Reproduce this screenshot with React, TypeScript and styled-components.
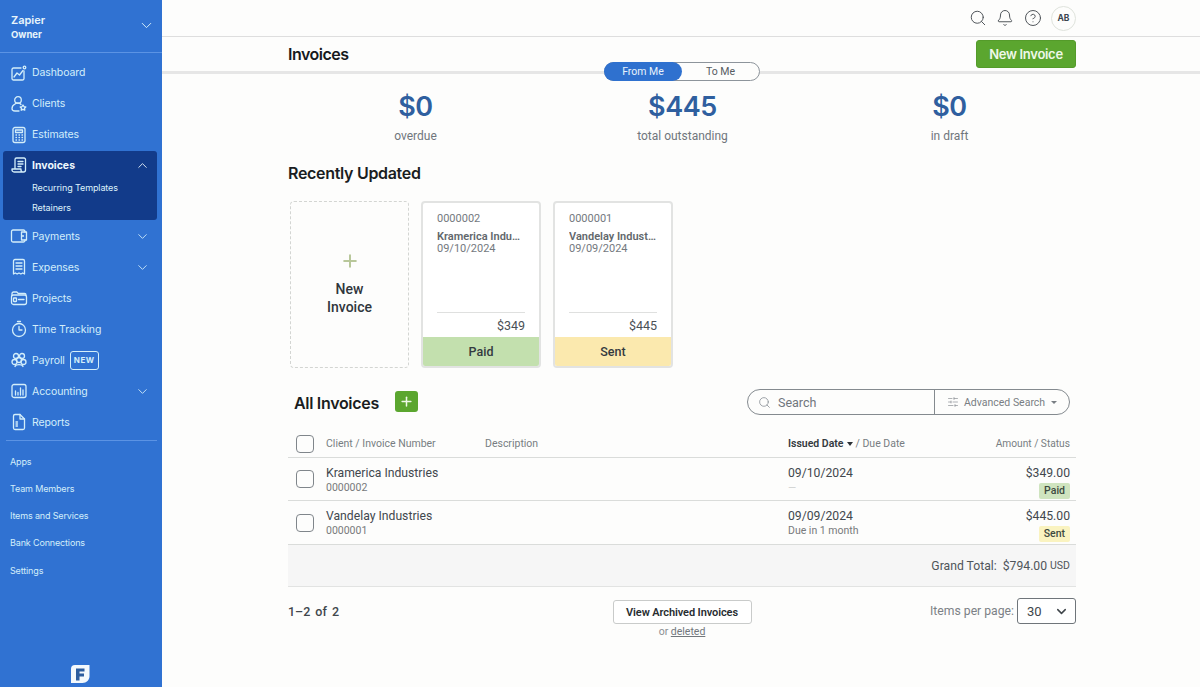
import React from "react";
import styled, { createGlobalStyle } from "styled-components";
import { ChevronDown, ChevronUp, Search, Bell, CircleHelp, SlidersHorizontal, Plus } from "lucide-react";

const Global = createGlobalStyle`
  html, body { margin: 0; padding: 0; background: #fdfdfc; }
  * { box-sizing: border-box; }
  body { font-family: Roboto, "Noto Sans", sans-serif; overflow: hidden; }
`;

const head = `"Inter", "Liberation Sans", sans-serif`;
const body = `Roboto, "Noto Sans", sans-serif`;
const ICE = "#d3eefa";

const Shell = styled.div`display: flex; width: 1200px; height: 687px; overflow: hidden;`;

const Sidebar = styled.aside`
  width: 162px; height: 687px; flex: none; background: #3072d2; color: ${ICE};
  display: flex; flex-direction: column; font-family: ${head};
`;
const Account = styled.div`
  height: 53px; flex: none; padding: 13px 7px 0 11px; display: flex; justify-content: space-between;
  border-bottom: 1px solid #5b93e4;
`;
const AccountName = styled.div`font-size: 11px; font-weight: 600; line-height: 15px; color: #e8f5fb;`;
const AccountRole = styled.div`font-size: 9.5px; font-weight: 700; line-height: 14px; color: #e8f5fb;`;
const AccountChevron = styled.div`padding-top: 4px; display: flex;`;
const Nav = styled.nav`display: flex; flex-direction: column; padding-top: 4px;`;
const NavItem = styled.div`
  height: 31px; display: flex; align-items: center; gap: 4px; padding: 0 12px 0 10px; font-size: 10.5px;
  letter-spacing: -0.1px; color: ${ICE};
`;
const NavLabel = styled.span`flex: 1; display: flex; align-items: center; gap: 5px; white-space: nowrap;`;
const NewTag = styled.span`
  border: 1px solid ${ICE}; border-radius: 3px; font-size: 8px; font-weight: 700; letter-spacing: 0.5px;
  padding: 0 3px; height: 19px; line-height: 17px;
`;
const ActiveGroup = styled.div`
  margin: 1px 5px 0.5px 3px; height: 69px; background: #123b8a; border-radius: 3px; flex: none;
`;
const ActiveItem = styled.div`
  height: 28px; display: flex; align-items: center; gap: 4px; padding: 0 7px; font-size: 10.5px;
  font-weight: 700; color: #eef8fd;
`;
const SubItem = styled.div`
  height: 20px; line-height: 20px; padding-left: 29px; font-size: 9px; color: #dff2fb; letter-spacing: -0.1px;
`;
const SubList = styled.div`margin-top: -1px;`;
const SideRule = styled.div`height: 1px; background: #5b93e4; margin: 2px 5px 7px 6px; flex: none;`;
const SideLink = styled.div`height: 27.3px; line-height: 27px; padding-left: 10px; font-size: 9px; letter-spacing: -0.15px; color: ${ICE};`;
const LogoSlot = styled.div`margin-top: auto; padding-bottom: 3px; display: flex; justify-content: center; padding-right: 2px;`;

const Main = styled.main`flex: 1; min-width: 0; display: flex; flex-direction: column; position: relative;`;
const TopBar = styled.header`
  height: 37px; flex: none; border-bottom: 1px solid #dedede; display: flex; justify-content: flex-end;
  align-items: center; gap: 9.5px; padding-right: 124px; color: #4d5257;
`;
const Avatar = styled.div`
  width: 25px; height: 25px; border-radius: 50%; border: 1.5px solid #dfe3dc; display: flex; align-items: center;
  justify-content: center; font: 700 8.5px ${head}; color: #3c4650;
`;
const PageHead = styled.div`
  height: 37px; flex: none; border-bottom: 3px solid #e6e6e6; padding: 3px 124px 0 126px; display: flex;
  justify-content: space-between; align-items: flex-start; position: relative;
`;
const PageTitle = styled.h1`margin: 2px 0 0; font: 600 16px/24px ${head}; letter-spacing: -0.5px; color: #16191d;`;
const PrimaryButton = styled.button`
  width: 100px; height: 28px; border: 1px solid #549b2a; border-radius: 3px; background: #5ba62f; color: #eef8e8;
  font: 600 13px ${head}; letter-spacing: -0.3px; padding: 0;
`;
const Toggle = styled.div`
  position: absolute; left: 442px; top: 25px; width: 156px; height: 19px; border: 1px solid #8d949b; border-radius: 10px;
  background: #fdfdfc; display: flex; font: 400 10.5px/18px ${body};
`;
const ToggleOption = styled.div<{ $on?: boolean }>`
  flex: ${(p) => (p.$on ? "0 0 78px" : "1")}; margin: ${(p) => (p.$on ? "-1px 0 -1px -1px" : "0")}; text-align: center;
  border-radius: 10px; line-height: ${(p) => (p.$on ? "20px" : "18px")};
  background: ${(p) => (p.$on ? "#2f71cf" : "transparent")}; color: ${(p) => (p.$on ? "#e8f3fb" : "#555b61")};
`;
const Content = styled.div`padding: 0 124px 0 126px; display: flex; flex-direction: column;`;
const Stats = styled.div`display: grid; grid-template-columns: repeat(3, 267px); margin: 13px 0 0 -6px; height: 74px;`;
const Stat = styled.div`text-align: center;`;
const StatValue = styled.div`font: 600 27px/40px ${head}; color: #2f5f9f; letter-spacing: -0.4px;`;
const StatLabel = styled.div`font: 400 12px/17px ${body}; color: #70767c; margin-top: 1px;`;
const SectionTitle = styled.h2`margin: 0; font: 600 16px/24px ${head}; letter-spacing: -0.31px; color: #1a1d21;`;
const Cards = styled.div`display: flex; gap: 12px; margin: 16px 0 0 2px;`;
const NewCard = styled.div`
  width: 119px; height: 167px; border: 1.5px dashed #d3d5d2; border-radius: 4px; display: flex; flex-direction: column;
  align-items: center; padding-top: 49px; font: 500 14px/18px ${body}; color: #30363c; text-align: center;
`;
const PlusSlot = styled.div`height: 29px; color: #b8c79a; display: flex; justify-content: center;`;
const InvoiceCard = styled.div`
  width: 120px; height: 167px; border: 2px solid #e2e3e2; border-radius: 4px; display: flex; flex-direction: column;
  background: #fff; overflow: hidden;
`;
const CardTop = styled.div`flex: 1; padding: 9px 14px 0 14px; display: flex; flex-direction: column; min-width: 0;`;
const CardNumber = styled.div`font: 400 11px/14px ${body}; color: #74797e;`;
const CardClient = styled.div`font: 600 11px/13px ${body}; color: #62676c; margin-top: 4px; white-space: nowrap; overflow: hidden; text-overflow: ellipsis; min-height: 13px;`;
const CardDate = styled.div`font: 400 11px/12px ${body}; color: #74797e;`;
const CardAmount = styled.div`
  margin-top: auto; border-top: 1px solid #dfe0df; font: 400 12.5px/25px ${body}; color: #4a5056; text-align: right; height: 25px;
`;
const CardStatus = styled.div<{ $bg: string }>`
  height: 29px; flex: none; background: ${(p) => p.$bg}; text-align: center; font: 500 12.5px/29px ${body}; color: #333a3f;
`;
const ListHead = styled.div`display: flex; align-items: center; justify-content: space-between; margin-top: 20px; height: 28px; padding: 0 6px;`;
const ListTitleGroup = styled.div`display: flex; align-items: center; gap: 16px;`;
const ListTitle = styled(SectionTitle)`position: relative; top: 1px;`;
const AddButton = styled.button`
  width: 23px; height: 21px; border: 0; border-radius: 3px; background: #5ba62f; color: #eef8e8; padding: 0;
  display: flex; align-items: center; justify-content: center; position: relative; top: -1px;
`;
const SearchBox = styled.div`
  width: 323px; height: 26px; border: 1.5px solid #848a8f; border-radius: 13px; display: flex; align-items: stretch;
  font-family: ${body}; color: #70767c;
`;
const SearchField = styled.div`
  flex: 1; border-right: 1.5px solid #848a8f; display: flex; align-items: center; gap: 7px; padding-left: 10px; font-size: 12.5px;
`;
const AdvSearch = styled.div`width: 134px; display: flex; align-items: center; gap: 5px; padding-left: 12px; font-size: 10.5px; color: #797e83;`;
const Caret = styled.span`width: 0; height: 0; border-left: 3px solid transparent; border-right: 3px solid transparent; border-top: 3px solid currentColor; margin-left: 1px;`;
const Row = styled.div<{ $h: number }>`
  height: ${(p) => p.$h}px; display: grid; grid-template-columns: 31px 159px 303px 1fr 130px; align-items: center;
  border-bottom: 1px solid #dadcda; padding: 0 6px 0 7px;
`;
const HeadRow = styled(Row)`margin-top: 14px;`;
const HeadCell = styled.div`font: 400 10.5px/14px ${body}; color: #787d82; white-space: nowrap;`;
const HeadEnd = styled(HeadCell)`text-align: right; font-size: 10.2px;`;
const HeadStrong = styled.b`font-weight: 600; color: #343a40;`;
const HeadCaret = styled.span`display: inline-block; width: 0; height: 0; border-left: 3.5px solid transparent; border-right: 3.5px solid transparent; border-top: 4px solid #2b3035; margin: 0 3px 1px 3px;`;
const CheckBox = styled.div`width: 18px; height: 18px; border: 1.5px solid #80868b; border-radius: 4px; background: #fdfdfc; margin-left: 1px;`;
const Primary = styled.div`font: 400 12.2px/16px ${body}; color: #42484e;`;
const Secondary = styled.div<{ $faint?: boolean }>`font: 400 10.5px/14px ${body}; color: ${(p) => (p.$faint ? "#cfd1d0" : "#77797b")};`;
const TextCell = styled.div`padding-top: 1px;`;
const AmountCell = styled.div`display: flex; flex-direction: column; align-items: flex-end; padding-top: 5px;`;
const Badge = styled.span<{ $bg: string }>`
  background: ${(p) => p.$bg}; font: 500 10.5px/16px ${body}; color: #3e4a40; border-radius: 2px; padding: 0 5px; height: 16px; margin-top: 2px;
`;
const Total = styled.div`
  height: 42px; background: #f6f6f6; border-bottom: 1px solid #e2e3e2; display: flex; align-items: center; justify-content: flex-end;
  gap: 6px; padding-right: 6px; font: 400 12.2px ${body}; color: #4f555a;
`;
const Usd = styled.small`font-size: 10.5px; margin-left: -3px;`;
const Footer = styled.div`display: grid; grid-template-columns: 325px 138px 1fr; margin-top: 11px;`;
const Range = styled.div`font: 500 12.5px/28px ${body}; color: #41474c; word-spacing: 2px;`;
const ArchiveBlock = styled.div`display: flex; flex-direction: column; align-items: center; margin-top: 2px;`;
const ArchiveButton = styled.button`
  width: 139px; height: 24px; border: 1px solid #c9cbca; border-radius: 3px; background: #fff; padding: 0;
  font: 600 11px ${body}; color: #272c30; letter-spacing: -0.1px; white-space: nowrap;
`;
const OrDeleted = styled.div`font: 400 10.5px/14px ${body}; color: #8a8f93; margin-top: 1px;`;
const DeletedLink = styled.span`text-decoration: underline; color: #72777c;`;
const PerPage = styled.div`display: flex; justify-content: flex-end; align-items: center; gap: 3px; font: 400 12.2px ${body}; color: #7c8186; height: 26px;`;
const Select = styled.div`
  width: 59px; height: 26px; border: 1.5px solid #6f757a; border-radius: 3px; display: flex; align-items: center; justify-content: space-between;
  padding: 0 6px 0 9px; color: #40464b; font-size: 13px; background: #fff;
`;

const S = ({ children }: { children: React.ReactNode }) => (
  <svg width="18" height="18" viewBox="0 0 18 18" fill="none" stroke={ICE} strokeWidth="1.3" strokeLinecap="round" strokeLinejoin="round" style={{ flex: "none" }}>
    {children}
  </svg>
);

const icons: Record<string, React.ReactNode> = {
  dash: (<><path d="M14 7v7.5a1.5 1.5 0 0 1-1.5 1.5h-9A1.5 1.5 0 0 1 2 14.5v-9A1.5 1.5 0 0 1 3.500 4H11" /><circle cx="14.500" cy="3.500" r="1.300" /><path d="M4 13l3-4 2.500 2L13 6.500" /></>),
  clients: (<><circle cx="8" cy="5" r="3.300" /><path d="M11 9.500A4 4 0 0 0 5 9c-2 1-3 2.500-3 4.500 0 2 1.500 2.500 3 2.500h4" /><path d="M13 10l1 1.700 1.800.3-1.300 1.300.3 1.900-1.800-.9-1.800.9.300-1.900-1.300-1.300 1.800-.3z" /></>),
  est: (<><rect x="3" y="1.500" width="12" height="15" rx="2" /><rect x="5.500" y="4" width="7" height="2.500" /><path d="M6 9h.5M9 9h.5M12 9h.5M6 11.500h.5M9 11.500h.5M12 11.500h.5M6 14h.5M9 14h.5M12 14h.5" /></>),
  inv: (<><path d="M5 13V3.500A1.500 1.500 0 0 1 6.500 2H14a1.500 1.500 0 0 1 1.500 1.500V14a2 2 0 0 1-2 2H4a2 2 0 0 1-2-2v-1h9v1a2 2 0 0 0 2 2" /><path d="M8 5.500h5M8 8h5M8 10.500h3" /></>),
  pay: (<><path d="M15 5V4.500A1.500 1.500 0 0 0 13.500 3H3a1.500 1.500 0 0 0-1.500 1.500v9A1.500 1.500 0 0 0 3 15h10.500a1.500 1.500 0 0 0 1.500-1.500V13" /><path d="M16.500 5h-5v8h5z" /><circle cx="13" cy="9" r=".4" /></>),
  exp: (<><path d="M3.500 16V3A1.500 1.500 0 0 1 5 1.500h8A1.500 1.500 0 0 1 14.500 3v13l-1.800-1-1.800 1-1.900-1-1.900 1-1.800-1z" /><path d="M6 5h6M6 8h6M6 11h6" /></>),
  proj: (<><path d="M2 6V4.500A1.500 1.500 0 0 1 3.500 3h3.300l1.500 1.500h6.200A1.500 1.500 0 0 1 16 6" /><rect x="1.500" y="6" width="15" height="9.500" rx="2" /><rect x="3.500" y="9" width="3" height="3.500" rx=".5" /><path d="M8.500 10.500h5.500" /></>),
  time: (<><circle cx="9" cy="10" r="6.500" /><path d="M9 6.500V10h3M7.500 1.500h3" /></>),
  payroll: (<><circle cx="6" cy="5" r="2.500" /><circle cx="12" cy="5" r="2.500" /><circle cx="4.500" cy="11" r="2.500" /><circle cx="13.500" cy="11" r="2.500" /><circle cx="9" cy="9" r="2.500" /><path d="M5 15.500c1-2.500 7-2.500 8 0" /></>),
  acc: (<><rect x="2" y="2.500" width="14" height="13" rx="2" /><path d="M5.500 13V9M8 13V10.500M10.500 13V6M13 13V8" /></>),
  rep: (<><path d="M10 1.500H5A1.500 1.500 0 0 0 3.500 3v12A1.500 1.500 0 0 0 5 16.500h8a1.500 1.500 0 0 0 1.500-1.500V6z" /><path d="M10 1.500V6h4.500M6 9h1.500M6 11h1.500M6 13h1.500" /></>),
};

const navTop = [
  { k: "dash", t: "Dashboard" },
  { k: "clients", t: "Clients" },
  { k: "est", t: "Estimates" },
];
const navBottom = [
  { k: "pay", t: "Payments", more: true },
  { k: "exp", t: "Expenses", more: true },
  { k: "proj", t: "Projects" },
  { k: "time", t: "Time Tracking" },
  { k: "payroll", t: "Payroll", tag: true },
  { k: "acc", t: "Accounting", more: true },
  { k: "rep", t: "Reports" },
];
const links = ["Apps", "Team Members", "Items and Services", "Bank Connections", "Settings"];

const Item = ({ k, t, more, tag }: { k: string; t: string; more?: boolean; tag?: boolean }) => (
  <NavItem>
    <S>{icons[k]}</S>
    <NavLabel>
      {t}
      {tag && <NewTag>NEW</NewTag>}
    </NavLabel>
    {more && <ChevronDown size={15} strokeWidth={1.4} />}
  </NavItem>
);

export default function App() {
  return (
    <Shell>
      <Global />
      <Sidebar>
        <Account>
          <div>
            <AccountName>Zapier</AccountName>
            <AccountRole>Owner</AccountRole>
          </div>
          <AccountChevron><ChevronDown size={17} strokeWidth={1.4} /></AccountChevron>
        </Account>
        <Nav>
          {navTop.map((n) => <Item key={n.t} {...n} />)}
          <ActiveGroup>
            <ActiveItem>
              <S>{icons.inv}</S>
              <NavLabel>Invoices</NavLabel>
              <ChevronUp size={15} strokeWidth={1.4} />
            </ActiveItem>
            <SubList>
              <SubItem>Recurring Templates</SubItem>
              <SubItem>Retainers</SubItem>
            </SubList>
          </ActiveGroup>
          {navBottom.map((n) => <Item key={n.t} {...n} />)}
        </Nav>
        <SideRule />
        {links.map((l) => <SideLink key={l}>{l}</SideLink>)}
        <LogoSlot>
          <svg width="20" height="20" viewBox="0 0 20 20">
            <path d="M5 1h14.500v11c0 4-3 7-7 7H1V5a4 4 0 0 1 4-4z" fill="#f4f9fc" />
            <path d="M6 4.500h8.500v3H9.500v2H14v3H9.500v4H6z" fill="#2c5d9e" />
          </svg>
        </LogoSlot>
      </Sidebar>
      <Main>
        <TopBar>
          <Search size={18} strokeWidth={1.3} />
          <Bell size={18} strokeWidth={1.3} />
          <CircleHelp size={18} strokeWidth={1.3} />
          <Avatar>AB</Avatar>
        </TopBar>
        <PageHead>
          <PageTitle>Invoices</PageTitle>
          <PrimaryButton>New Invoice</PrimaryButton>
          <Toggle>
            <ToggleOption $on>From Me</ToggleOption>
            <ToggleOption>To Me</ToggleOption>
          </Toggle>
        </PageHead>
        <Content>
          <Stats>
            <Stat><StatValue>$0</StatValue><StatLabel>overdue</StatLabel></Stat>
            <Stat><StatValue>$445</StatValue><StatLabel>total outstanding</StatLabel></Stat>
            <Stat><StatValue>$0</StatValue><StatLabel>in draft</StatLabel></Stat>
          </Stats>
          <section>
            <SectionTitle>Recently Updated</SectionTitle>
            <Cards>
              <NewCard>
                <PlusSlot><Plus size={20} strokeWidth={2.4} /></PlusSlot>
                New<br />Invoice
              </NewCard>
              <InvoiceCard>
                <CardTop>
                  <CardNumber>0000002</CardNumber>
                  <CardClient>Kramerica Industries</CardClient>
                  <CardDate>09/10/2024</CardDate>
                  <CardAmount>$349</CardAmount>
                </CardTop>
                <CardStatus $bg="#c3e0ae">Paid</CardStatus>
              </InvoiceCard>
              <InvoiceCard>
                <CardTop>
                  <CardNumber>0000001</CardNumber>
                  <CardClient>Vandelay Industries</CardClient>
                  <CardDate>09/09/2024</CardDate>
                  <CardAmount>$445</CardAmount>
                </CardTop>
                <CardStatus $bg="#fbe9ae">Sent</CardStatus>
              </InvoiceCard>
            </Cards>
          </section>
          <ListHead>
            <ListTitleGroup>
              <ListTitle>All Invoices</ListTitle>
              <AddButton><Plus size={15} strokeWidth={2.4} /></AddButton>
            </ListTitleGroup>
            <SearchBox>
              <SearchField><Search size={13} strokeWidth={1.5} color="#8a9096" />Search</SearchField>
              <AdvSearch><SlidersHorizontal size={12} strokeWidth={1.2} />Advanced Search<Caret /></AdvSearch>
            </SearchBox>
          </ListHead>
          <HeadRow $h={28}>
            <CheckBox />
            <HeadCell>Client / Invoice Number</HeadCell>
            <HeadCell>Description</HeadCell>
            <HeadCell><HeadStrong>Issued Date</HeadStrong><HeadCaret />/ Due Date</HeadCell>
            <HeadEnd>Amount / Status</HeadEnd>
          </HeadRow>
          <Row $h={43}>
            <CheckBox />
            <TextCell><Primary>Kramerica Industries</Primary><Secondary>0000002</Secondary></TextCell>
            <div />
            <TextCell><Primary>09/10/2024</Primary><Secondary $faint>—</Secondary></TextCell>
            <AmountCell><Primary>$349.00</Primary><Badge $bg="#cfe4bf">Paid</Badge></AmountCell>
          </Row>
          <Row $h={44}>
            <CheckBox />
            <TextCell><Primary>Vandelay Industries</Primary><Secondary>0000001</Secondary></TextCell>
            <div />
            <TextCell><Primary>09/09/2024</Primary><Secondary>Due in 1 month</Secondary></TextCell>
            <AmountCell><Primary>$445.00</Primary><Badge $bg="#faf3c0">Sent</Badge></AmountCell>
          </Row>
          <Total>
            <span>Grand Total:</span>
            <span>$794.00</span>
            <Usd>USD</Usd>
          </Total>
          <Footer>
            <Range>1–2 of 2</Range>
            <ArchiveBlock>
              <ArchiveButton>View Archived Invoices</ArchiveButton>
              <OrDeleted>or <DeletedLink>deleted</DeletedLink></OrDeleted>
            </ArchiveBlock>
            <PerPage>
              Items per page:
              <Select>30<ChevronDown size={15} strokeWidth={2.4} /></Select>
            </PerPage>
          </Footer>
        </Content>
      </Main>
    </Shell>
  );
}
